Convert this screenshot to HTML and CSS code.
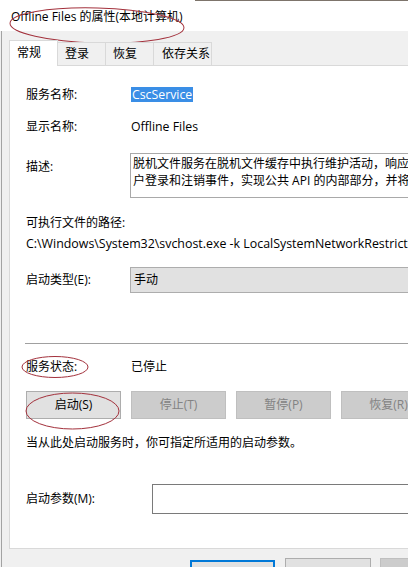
FILE: index.html
```html
<!DOCTYPE html>
<html lang="zh-CN">
<head>
<meta charset="utf-8">
<title>Offline Files 的属性(本地计算机)</title>
<link rel="stylesheet" href="styles.css">
</head>
<body>
<div class="window">
  <div class="titlebar"><span class="title">Offline Files 的属性(本地计算机)</span></div>
  <div class="client">
    <div class="tabs">
      <div class="tab selected">常规</div>
      <div class="tab">登录</div>
      <div class="tab">恢复</div>
      <div class="tab wide">依存关系</div>
    </div>
    <div class="panel">
      <div class="row r-name"><span class="label">服务名称:</span><span class="value"><span class="sel">CscService</span></span></div>
      <div class="row r-display"><span class="label">显示名称:</span><span class="value">Offline Files</span></div>
      <div class="row r-desc">
        <span class="label desc-label">描述:</span>
        <div class="descbox">
          <div class="line">脱机文件服务在脱机文件缓存中执行维护活动，响应用</div>
          <div class="line">户登录和注销事件，实现公共 API 的内部部分，并将</div>
        </div>
      </div>
      <div class="row r-pathlabel"><span class="label">可执行文件的路径:</span></div>
      <div class="row r-path">C:\Windows\System32\svchost.exe -k LocalSystemNetworkRestricted</div>
      <div class="row r-type"><span class="label">启动类型(E):</span><div class="combo">手动</div></div>
      <div class="separator"></div>
      <div class="row r-status"><span class="label">服务状态:</span><span class="value">已停止</span></div>
      <div class="buttons">
        <div class="btn">启动(S)</div>
        <div class="btn disabled">停止(T)</div>
        <div class="btn disabled">暂停(P)</div>
        <div class="btn disabled">恢复(R)</div>
      </div>
      <div class="row r-hint">当从此处启动服务时，你可指定所适用的启动参数。</div>
      <div class="row r-param"><span class="label wide-label">启动参数(M):</span><div class="input"></div></div>
    </div>
    <div class="footer">
      <div class="fbtn default">确定</div>
      <div class="fbtn">取消</div>
      <div class="fbtn disabled">应用(A)</div>
    </div>
  </div>
  <svg class="marks" width="408" height="567" viewBox="0 0 408 567" aria-hidden="true">
    <ellipse cx="97" cy="25.5" rx="87" ry="17.5" transform="rotate(1.5 97 25.5)"/>
    <ellipse cx="55" cy="367" rx="33" ry="10.5"/>
    <ellipse cx="72.5" cy="411" rx="46.5" ry="18"/>
  </svg>
</div>
</body>
</html>
```
FILE: styles.css
```css
html, body {
  margin: 0;
  padding: 0;
  width: 408px;
  height: 567px;
  overflow: hidden;
  background: #f0f0f0;
}
body {
  font-family: "Open Sans", "Noto Sans CJK SC", sans-serif;
  font-size: 12px;
  color: #000;
}
.window {
  position: relative;
  width: 408px;
  height: 567px;
  overflow: hidden;
}
.titlebar {
  height: 31px;
  background: linear-gradient(#7d746b, #7d746b) no-repeat 195px 0 / 213px 1px, #fff;
  display: flex;
  align-items: center;
  padding-left: 11px;
  box-sizing: border-box;
}
.title {
  font-size: 12px;
  line-height: 16px;
  margin-top: 2px;
}
.client {
  margin-left: 1px;
  border-left: 1px solid #a3a3a3;
  height: 536px;
  padding-left: 7px;
  padding-top: 9px;
  box-sizing: border-box;
}
.tabs {
  display: flex;
  align-items: flex-end;
  height: 25px;
  position: relative;
  z-index: 1;
}
.tab {
  box-sizing: border-box;
  height: 23px;
  width: 48px;
  padding-left: 7px;
  line-height: 22px;
  border: 1px solid #d9d9d9;
  border-bottom: none;
  border-left: none;
  background: #f0f0f0;
}
.tab.selected {
  width: 49px;
  border-left: 1px solid #d9d9d9;
  background: #fff;
  padding-left: 7px;
  line-height: 24px;
  margin-bottom: -1px;
  height: 26px;
}
.tab.wide {
  width: 58px;
  padding-left: 8px;
}
.panel {
  box-sizing: border-box;
  width: 480px;
  height: 484px;
  border: 1px solid #d9d9d9;
  background: #fff;
  padding: 19px 0 0 16px;
}
.row {
  display: flex;
  align-items: center;
  line-height: 20px;
  white-space: nowrap;
}
.label {
  width: 105px;
  flex: none;
}
.value {
  flex: none;
}
.sel {
  background: #3a8ee6;
  color: #fff;
  padding: 1px 1px 0;
  line-height: 14px;
  display: inline-block;
  font-size: 12.3px;
}
.r-display { margin-top: 12px; }
.r-display .value { font-size: 12.3px; }
.r-desc {
  margin-top: 16px;
  align-items: flex-start;
}
.desc-label { padding-top: 4px; margin-right: -1px; }
.descbox {
  box-sizing: border-box;
  height: 45px;
  width: 320px;
  border: 1px solid #a9a9a9;
  border-right: none;
  padding: 1px 0 0 2px;
  line-height: 17px;
  overflow: hidden;
}
.r-pathlabel { margin-top: 15px; }
.r-path { margin-top: 1px; font-size: 12.4px; }
.r-type { margin-top: 13px; }
.combo {
  margin-left: -1px;
  box-sizing: border-box;
  height: 26px;
  width: 320px;
  background: #e1e1e1;
  border: 1px solid #adadad;
  border-right: none;
  line-height: 24px;
  padding-left: 3px;
}
.separator {
  margin-top: 50px;
  margin-left: -1px;
  height: 1px;
  background: #a0a0a0;
}
.r-status { margin-top: 13px; }
.buttons {
  display: flex;
  gap: 10px;
  margin-top: 14px;
}
.btn {
  box-sizing: border-box;
  width: 95px;
  height: 28px;
  flex: none;
  background: #e1e1e1;
  border: 1px solid #adadad;
  text-align: center;
  line-height: 26px;
}
.btn.disabled {
  background: #cccccc;
  border-color: #bfbfbf;
  color: #838383;
}
.r-hint { margin-top: 14px; }
.r-param { margin-top: 31px; }
.wide-label { width: 126px; }
.input {
  box-sizing: border-box;
  height: 30px;
  width: 320px;
  border: 1px solid #7a7a7a;
  border-right: none;
}
.footer {
  display: flex;
  padding-left: 181px;
  margin-top: 9px;
  gap: 10px;
}
.fbtn {
  box-sizing: border-box;
  width: 86px;
  height: 30px;
  flex: none;
  background: #e1e1e1;
  border: 1px solid #adadad;
  text-align: center;
  line-height: 20px;
  padding-top: 10px;
}
.fbtn.default {
  border: 2px solid #0078d7;
  width: 85px;
  margin-top: 2px;
}
.fbtn.disabled {
  background: #cccccc;
  border-color: #bfbfbf;
  color: #838383;
  margin-left: -1px;
}
.marks {
  position: absolute;
  left: 0;
  top: 0;
  pointer-events: none;
}
.marks ellipse {
  fill: none;
  stroke: #a3313c;
  stroke-width: 1;
}
```
